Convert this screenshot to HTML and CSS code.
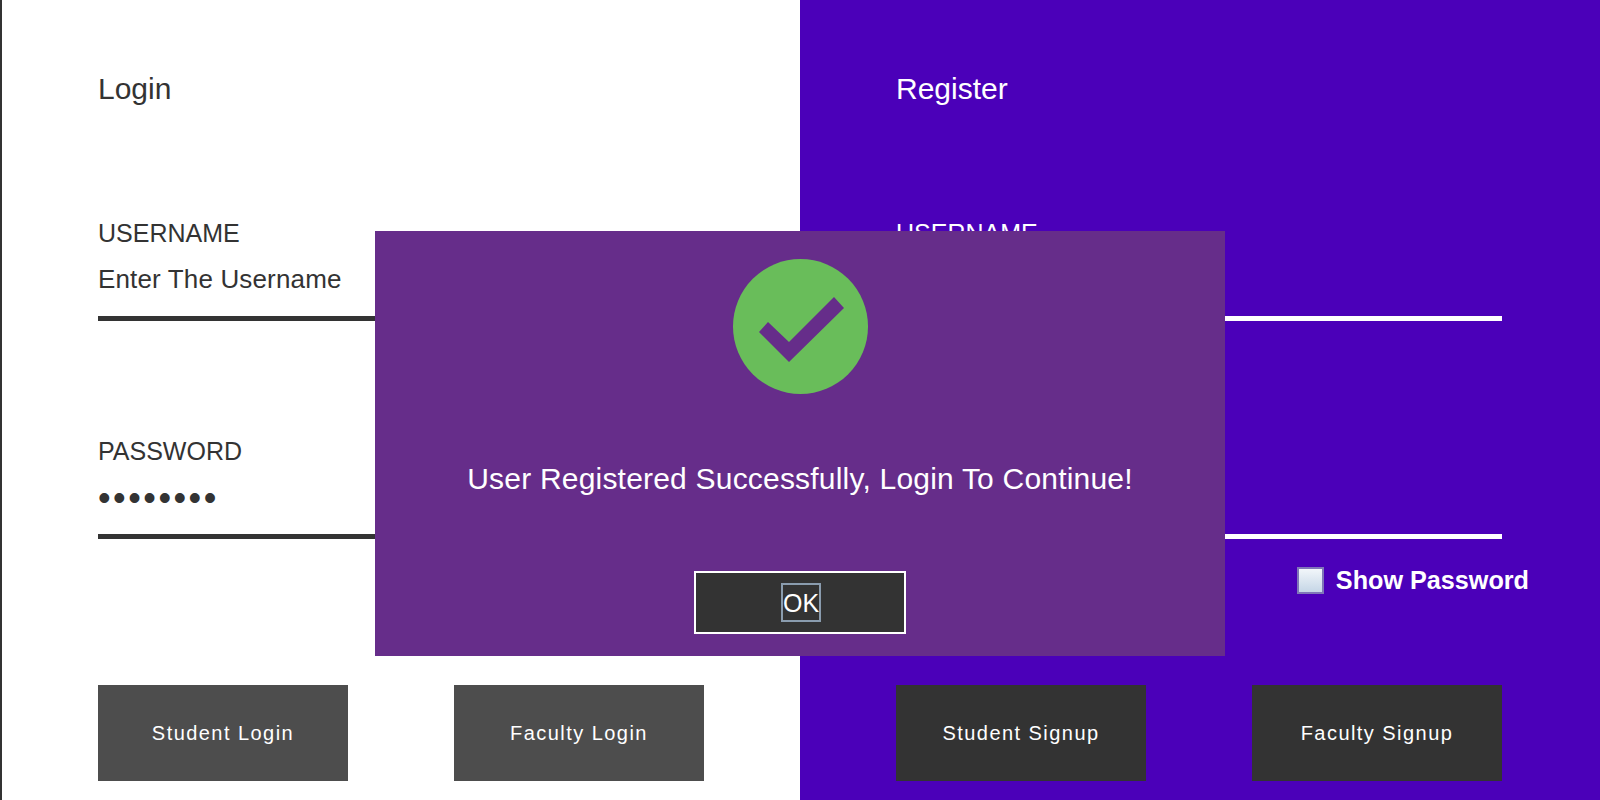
FILE: index.html
```html
<!DOCTYPE html>
<html>
<head>
    <title>Login / Register</title>
    <link rel="stylesheet" href="styles.css">
</head>
<body>
    <div class="panel login-panel">
        <h1>Login</h1>

        <div class="field">
            <label for="login-user">USERNAME</label>
            <input type="text" id="login-user" value="Enter The Username">
        </div>

        <div class="field">
            <label for="login-pass">PASSWORD</label>
            <input type="password" id="login-pass" value="password">
        </div>

        <div class="show-row"></div>

        <div class="button-row">
            <button class="action-btn">Student Login</button>
            <button class="action-btn">Faculty Login</button>
        </div>
    </div>

    <div class="panel register-panel">
        <h1>Register</h1>

        <div class="field">
            <label for="reg-user">USERNAME</label>
            <input type="text" id="reg-user">
        </div>

        <div class="field">
            <label for="reg-pass">PASSWORD</label>
            <input type="password" id="reg-pass">
        </div>

        <div class="show-row">
            <input type="checkbox" id="show-pass">
            <label for="show-pass">Show Password</label>
        </div>

        <div class="button-row">
            <button class="action-btn">Student Signup</button>
            <button class="action-btn">Faculty Signup</button>
        </div>
    </div>

    <div class="modal">
        <svg class="modal-icon" viewBox="0 0 135 135" width="135" height="135">
            <circle cx="67.5" cy="67.5" r="67.5" fill="#69bd5a"/>
            <path d="M35 63 L56 83 L101 38 L111 49 L56 103 L26 73 Z" fill="#662d8a"/>
        </svg>
        <p class="modal-text">User Registered Successfully, Login To Continue!</p>
        <button class="ok-btn"><span>OK</span></button>
    </div>
</body>
</html>
```

FILE: styles.css
```css
:root {
    --dark: #333333;
    --violet: #4b00b9;
    --modal: #662d8a;
}

body {
    margin: 0;
    display: flex;
    height: 800px;
    overflow: hidden;
    position: relative;
    font-family: "Liberation Sans", Arial, sans-serif;
}

.panel {
    width: 800px;
    box-sizing: border-box;
    padding: 70px 98px 0 96px;
    display: flex;
    flex-direction: column;
}

.login-panel {
    background: #ffffff;
    color: var(--dark);
    border-left: 2px solid var(--dark);
    padding-right: 96px;
}

.register-panel {
    background: var(--violet);
    color: #ffffff;
}

h1 {
    margin: 0 0 109px;
    font-size: 30px;
    font-weight: normal;
    line-height: 38px;
}

.field {
    height: 104px;
    margin-bottom: 114px;
}

.field + .field {
    margin-bottom: 0;
}

.field label {
    display: block;
    font-size: 25px;
    line-height: 32px;
}

.field input {
    display: block;
    width: 100%;
    box-sizing: border-box;
    height: 72px;
    padding: 0 0 7px;
    border: none;
    border-bottom: 5px solid currentColor;
    border-radius: 0;
    outline: none;
    background: none;
    color: inherit;
    font-family: inherit;
    font-size: 26px;
    letter-spacing: 0.15px;
}

.field input[type="password"] {
    font-size: 36px;
    letter-spacing: 2.5px;
    padding-bottom: 6px;
}

.show-row {
    height: 27px;
    margin-top: 28px;
    display: flex;
    align-items: center;
    justify-content: flex-end;
    gap: 12px;
    margin-right: -27px;
}

.show-row label {
    font-size: 25.2px;
    font-weight: bold;
}

.show-row input {
    appearance: none;
    width: 27px;
    height: 27px;
    box-sizing: border-box;
    margin: 0;
    border: 2px solid #7f76b8;
    background: linear-gradient(#f2f6fa, #c5d6e6);
}

.button-row {
    margin-top: 91px;
    display: flex;
    justify-content: space-between;
}

.action-btn {
    width: 250px;
    height: 96px;
    border: none;
    padding: 1px 0 0;
    color: #ffffff;
    font-family: inherit;
    font-size: 20px;
    letter-spacing: 1.45px;
}

.login-panel .action-btn {
    background: #4d4d4d;
}

.register-panel .action-btn {
    background: var(--dark);
}

/* dialog sits over both panels */
.modal {
    position: absolute;
    top: 231px;
    left: 375px;
    width: 850px;
    height: 425px;
    background: var(--modal);
    color: #ffffff;
    display: flex;
    flex-direction: column;
    align-items: center;
}

.modal-icon {
    margin-top: 28px;
    display: block;
}

.modal-text {
    margin: 69px 0 0;
    font-size: 30px;
    line-height: 32px;
    letter-spacing: 0.2px;
}

.ok-btn {
    margin-top: 76px;
    width: 212px;
    height: 63px;
    box-sizing: border-box;
    background: var(--dark);
    border: 2px solid #ffffff;
    color: #ffffff;
    font-family: inherit;
    font-size: 25px;
    display: flex;
    align-items: center;
    justify-content: center;
    padding: 0 0 0 2px;
}

.ok-btn span {
    display: block;
    width: 40px;
    height: 39px;
    box-sizing: border-box;
    border: 2px solid #8a9cae;
    line-height: 37px;
    text-align: center;
}
```
